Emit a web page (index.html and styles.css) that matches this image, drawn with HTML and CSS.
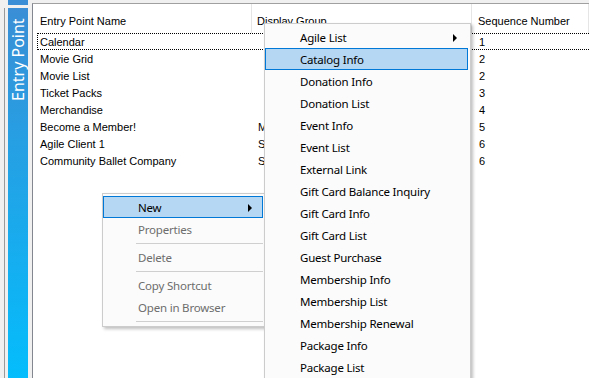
FILE: index.html
```html
<!DOCTYPE html>
<html lang="en">
<head>
    <meta charset="UTF-8">
    <title>Entry Points</title>
    <link rel="stylesheet" href="styles.css">
</head>
<body>
    <div class="side">
        <div class="side-top"></div>
        <div class="side-frame">
            <div class="tab"><span class="tab-label">Entry Point</span></div>
        </div>
    </div>

    <div class="list">
        <div class="list-header">
            <div class="col col-name">Entry Point Name</div>
            <div class="col col-group">Display Group</div>
            <div class="col col-seq">Sequence Number</div>
        </div>
        <div class="row focused">
            <div class="col col-name">Calendar</div>
            <div class="col col-group"></div>
            <div class="col col-seq">1</div>
        </div>
        <div class="row">
            <div class="col col-name">Movie Grid</div>
            <div class="col col-group"></div>
            <div class="col col-seq">2</div>
        </div>
        <div class="row">
            <div class="col col-name">Movie List</div>
            <div class="col col-group"></div>
            <div class="col col-seq">2</div>
        </div>
        <div class="row">
            <div class="col col-name">Ticket Packs</div>
            <div class="col col-group"></div>
            <div class="col col-seq">3</div>
        </div>
        <div class="row">
            <div class="col col-name">Merchandise</div>
            <div class="col col-group"></div>
            <div class="col col-seq">4</div>
        </div>
        <div class="row">
            <div class="col col-name">Become a Member!</div>
            <div class="col col-group">M</div>
            <div class="col col-seq">5</div>
        </div>
        <div class="row">
            <div class="col col-name">Agile Client 1</div>
            <div class="col col-group">S</div>
            <div class="col col-seq">6</div>
        </div>
        <div class="row">
            <div class="col col-name">Community Ballet Company</div>
            <div class="col col-group">S</div>
            <div class="col col-seq">6</div>
        </div>
    </div>

    <!-- Context menu -->
    <div class="menu context-menu">
        <div class="menu-item active has-sub">New</div>
        <div class="menu-item disabled">Properties</div>
        <div class="menu-sep"></div>
        <div class="menu-item disabled">Delete</div>
        <div class="menu-sep"></div>
        <div class="menu-item disabled">Copy Shortcut</div>
        <div class="menu-item disabled">Open in Browser</div>
        <div class="menu-sep"></div>
    </div>

    <!-- New submenu -->
    <div class="menu sub-menu">
        <div class="menu-item has-sub">Agile List</div>
        <div class="menu-item active">Catalog Info</div>
        <div class="menu-item">Donation Info</div>
        <div class="menu-item">Donation List</div>
        <div class="menu-item">Event Info</div>
        <div class="menu-item">Event List</div>
        <div class="menu-item">External Link</div>
        <div class="menu-item">Gift Card Balance Inquiry</div>
        <div class="menu-item">Gift Card Info</div>
        <div class="menu-item">Gift Card List</div>
        <div class="menu-item">Guest Purchase</div>
        <div class="menu-item">Membership Info</div>
        <div class="menu-item">Membership List</div>
        <div class="menu-item">Membership Renewal</div>
        <div class="menu-item">Package Info</div>
        <div class="menu-item">Package List</div>
    </div>
</body>
</html>
```

FILE: styles.css
```css
body {
    margin: 0;
    height: 378px;
    overflow: hidden;
    display: flex;
    background: #f0f0f0;
    font-family: 'Liberation Sans', Arial, sans-serif;
    font-size: 11px;
    color: #000;
    position: relative;
}

/* Side tab strip */
.side {
    width: 32px;
    flex-shrink: 0;
    display: flex;
    flex-direction: column;
}

.side-top {
    height: 5px;
    margin-left: 8px;
    width: 20px;
    background: #3a8ed5;
}

.side-frame {
    flex: 1;
    margin: 3px 0 0 4px;
    width: 24px;
    border-left: 1px solid #9a9a9a;
    border-right: 1px solid #9a9a9a;
    padding-left: 3px;
    display: flex;
}

.tab {
    width: 20px;
    background: linear-gradient(#3a8ed5, #04bdfc);
    display: flex;
    justify-content: center;
    padding-top: 10px;
}

.tab-label {
    writing-mode: vertical-rl;
    transform: rotate(180deg);
    font-family: 'Noto Sans', sans-serif;
    font-size: 16px;
    color: #fff;
    line-height: 20px;
    height: 87px;
    text-align: right;
}

/* List view */
.list {
    flex: 1;
    margin-top: 3px;
    background: #fff;
    border-left: 1px solid #828790;
    border-top: 1px solid #a0a0a0;
}

.list-header {
    display: flex;
    height: 29px;
    align-items: center;
}

.list-header .col {
    height: 29px;
    line-height: 34px;
    border-right: 1px solid #e5e5e5;
}

.row {
    display: flex;
    height: 17px;
    line-height: 16px;
    margin-left: 4px;
    border: 1px dotted transparent;
    box-sizing: border-box;
}

.row.focused {
    border-color: #000;
}

.col {
    white-space: nowrap;
    overflow: hidden;
    box-sizing: border-box;
}

.col-name {
    width: 219px;
    padding-left: 7px;
}

.col-group {
    width: 220px;
    padding-left: 5px;
}

.col-seq {
    width: 117px;
    padding-left: 6px;
}

.row .col-name { width: 215px; padding-left: 2px; }
.row .col-seq { padding-left: 6px; }

/* Popup menus */
.menu {
    position: absolute;
    background: #fbfbfb;
    border: 1px solid #cccccc;
    padding: 2px 2px 2px 0;
    box-shadow: 2px 2px 3px rgba(0, 0, 0, 0.25);
    font-family: 'Noto Sans', sans-serif;
    font-size: 11.5px;
    letter-spacing: -0.2px;
}

.context-menu {
    left: 102px;
    top: 193px;
    width: 160px;
}

.sub-menu {
    left: 264px;
    top: 23px;
    width: 203px;
}

.menu-item {
    height: 22px;
    line-height: 21px;
    padding-left: 34px;
    border: 1px solid transparent;
    box-sizing: border-box;
    position: relative;
    white-space: nowrap;
}

.menu-item.active {
    background: #b5d7f3;
    border-color: #0078d7;
}

.menu-item.disabled {
    color: #6d6d6d;
}

.menu-item.has-sub::after {
    content: '';
    position: absolute;
    right: 10px;
    top: 7px;
    border-left: 4px solid #000;
    border-top: 4px solid transparent;
    border-bottom: 4px solid transparent;
}

.menu-sep {
    height: 6px;
    margin-left: 33px;
    position: relative;
}

.menu-sep::before {
    content: '';
    position: absolute;
    left: 0;
    right: 0;
    top: 3px;
    border-top: 1px solid #cfcfcf;
}
```
